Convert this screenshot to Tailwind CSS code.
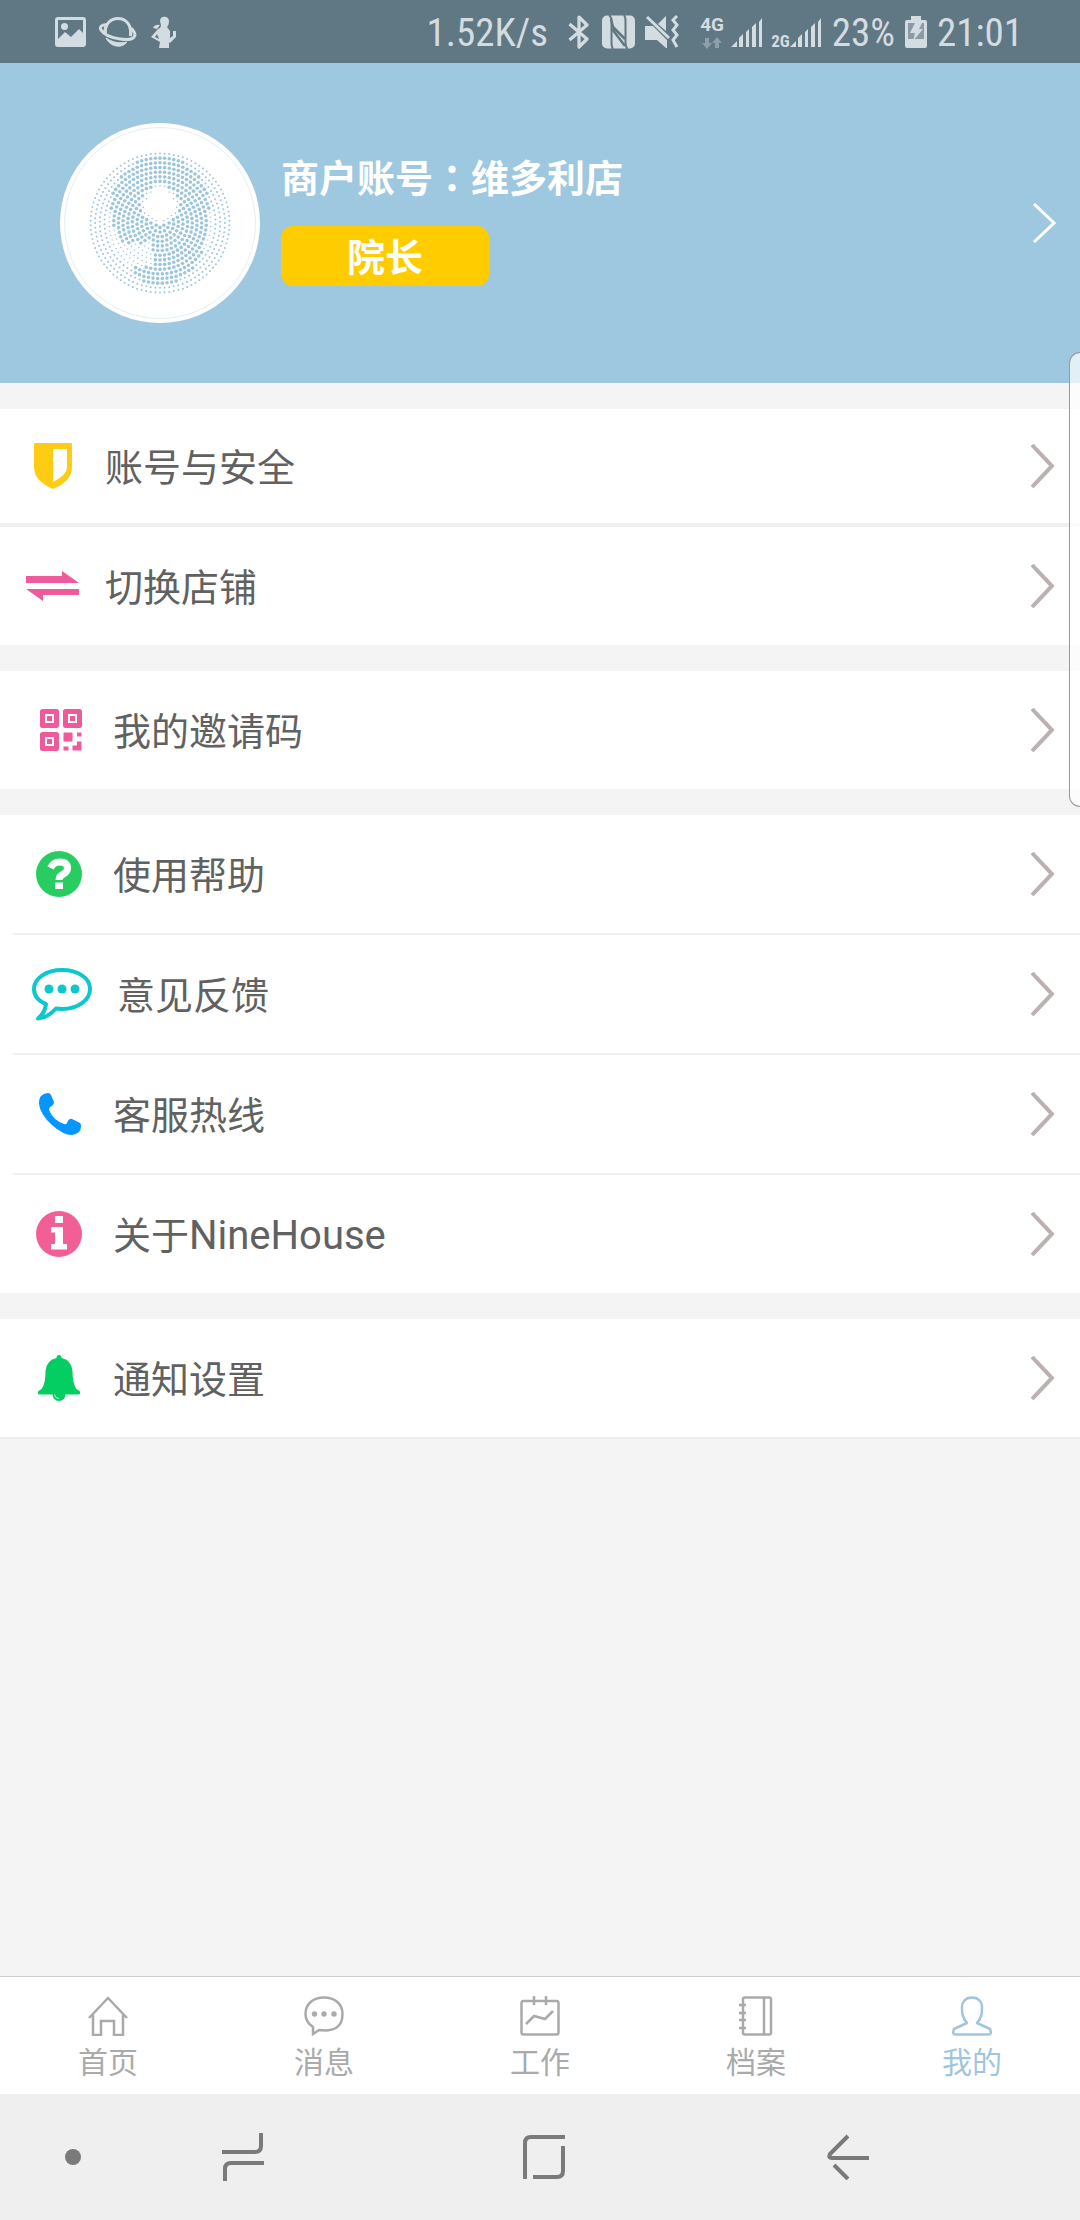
<!DOCTYPE html>
<html lang="zh-CN">
<head>
<meta charset="utf-8">
<meta name="viewport" content="width=device-width, initial-scale=1">
<title>我的</title>
<script src="https://cdn.jsdelivr.net/npm/@tailwindcss/browser@4"></script>
</head>
<body class="relative flex min-h-screen flex-col bg-[#f4f4f4] font-[Roboto,'Noto_Sans_CJK_SC',sans-serif] text-[38px] text-[#616161]">

<!-- Status bar -->
<div class="flex h-[63px] items-center bg-[#607784] pr-[57px] pl-[55px] font-['Roboto_Condensed','Liberation_Sans_Narrow',Roboto,sans-serif] text-[39px] leading-none text-[#d3dce0]">
  <svg class="h-8 w-8" viewBox="0 0 32 32" fill="currentColor"><path fill-rule="evenodd" d="M3 1h25a3 3 0 0 1 3 3v24a3 3 0 0 1-3 3H3a3 3 0 0 1-3-3V4a3 3 0 0 1 3-3zM3 4v19l7-7 6 5 8-8 4 4V4z"/><circle cx="9.500" cy="10.500" r="3.500"/></svg>
  <svg class="ml-3 h-8 w-[38px]" viewBox="0 0 38 32" fill="none" stroke="currentColor" stroke-width="3"><path d="M6.500 18C5 9 11 2.500 19 2.500S33 9 31.500 20"/><path d="M8 9C3 8 0 11 2 14c3 5 12 8 19 9 8 1 14 1 15-4 0-3-2-5-4-7M6.500 18C5.500 15 6 12 8 9M31.500 20c.6-3 .4-5-.5-8"/><path d="M7 22c4 9 16 11 21 4-8 2-15 0-21-4z" fill="currentColor" stroke-width="1"/></svg>
  <svg class="ml-[14px] h-8 w-[26px]" viewBox="0 0 26 32" fill="currentColor"><path fill-rule="evenodd" d="M9 5c0-6 9-5 9 0 0 3-1 5-2 6l3 4v6l-1 4v7H8l1-6-9-5 7-8 2-1 1-2zM6 18l-2 3 4 2z"/><path d="M2 12q2-4 7-3l-3 4z"/><path d="M22 15h3v6l-6 6-3-3 6-4z"/></svg>
  <span class="ml-auto pt-1">1.52K/s</span>
  <svg class="ml-5 h-[34px] w-[22px]" viewBox="0 0 22 34" fill="none" stroke="currentColor" stroke-width="3.200" stroke-linejoin="round"><path d="M1.500 9l17.500 15-8 8V2l8 8L1.500 25"/></svg>
  <svg class="ml-3 h-[34px] w-[33px]" viewBox="0 0 33 34"><rect width="33" height="33" y="0.500" rx="5" fill="currentColor"/><path fill="none" stroke="#607784" stroke-width="2" d="M7 0q2.500 2 2.500 6v22q0 4 1.500 6M25.500 34q-2-2-2-6V6q0-4-1.500-6"/><path fill="none" stroke="#607784" stroke-width="2.500" d="M9 4l2 8 12 12M10 14l13 17"/></svg>
  <svg class="ml-[10px] h-[34px] w-[35px]" viewBox="0 0 35 34"><path fill="currentColor" d="M0 11h8l14 14v8h-1l-9-8H0zM13 9l8-8v15z"/><path fill="none" stroke="currentColor" stroke-width="3" d="M2 2l22 21M32 1l-4 4 4 5-4 5 4 5-4 5 4 7"/></svg>
  <span class="ml-5 flex w-6 flex-col items-center gap-[5px] pt-[2px] font-[Roboto,sans-serif] text-[19px] leading-[15px] font-bold">4G
    <svg class="h-3 w-5 opacity-40" viewBox="0 0 20 12" fill="currentColor"><path d="M3 1h4v5h3l-5 6-5-6h3zM13 11h4V6h3l-5-6-5 6h3z"/></svg></span>
  <svg class="ml-[7px] mt-[3px] h-[30px] w-8" viewBox="0 0 32 30" fill="currentColor"><path d="M0 29l6-6v6zM8 29V20l4-4v13zM15 29V14l3-3v18zM21 29V9l4-4v24zM28 29V4l3-4v29z"/></svg>
  <span class="ml-2 self-end pb-4 text-[17px] leading-[12px] font-bold">2G</span>
  <svg class="mt-[3px] h-[30px] w-8" viewBox="0 0 32 30" fill="currentColor"><path d="M0 29l6-6v6zM8 29V20l4-4v13zM15 29V14l3-3v18zM21 29V9l4-4v24zM28 29V4l3-4v29z"/></svg>
  <span class="ml-[10px] pt-1">23%</span>
  <svg class="ml-[10px] h-8 w-[22px]" viewBox="0 0 22 32"><path fill="currentColor" d="M6 0h10v4h4a2 2 0 0 1 2 2v24a2 2 0 0 1-2 2H2a2 2 0 0 1-2-2V6a2 2 0 0 1 2-2h4z"/><path fill="#8b9ba5" d="M3 7h16v16H3z"/><path fill="currentColor" d="M10 7h7l-3 6h4L8 25l2-8H5z"/></svg>
  <span class="ml-[10px] pt-1">21:01</span>
</div>

<!-- Account header -->
<header>
  <a href="#" class="flex h-80 items-center bg-[#9dc8df] pr-[24px] pl-[60px] text-white">
    <svg class="h-[200px] w-[200px]" viewBox="-100 -100 200 200" role="img" aria-label="头像"><circle r="100" fill="#fff"/><circle r="95.500" fill="none" stroke="#e3eff5"/><g id="dots" fill="#9dc6dd"></g></svg>
    <div class="ml-[21px] flex flex-col items-start gap-[18px] pb-[10px] font-bold">
      <h1 class="leading-[58px]">商户账号<span class="font-['Noto_Sans_CJK_TC',sans-serif] leading-none" lang="zh-TW">：</span>维多利店</h1>
      <span class="flex h-[60px] w-[208px] items-center justify-center rounded-xl bg-[#ffcc00] pt-1">院长</span>
    </div>
    <svg class="ml-auto h-10 w-6" viewBox="0 0 24 40" fill="none" stroke="currentColor" stroke-width="3"><path d="M2 1l20 19L2 39"/></svg>
  </a>
</header>

<main class="flex grow flex-col">
  <ul class="mt-[26px] bg-white">
    <li><a href="#" class="flex h-[114px] items-center pr-[26px]">
      <span class="flex w-[105px] justify-center"><svg class="h-12 w-10" viewBox="0 0 40 48"><path fill="#ffcc14" fill-rule="evenodd" d="M2 1h36q1 0 1 1v23q0 14-19 22Q1 39 1 25V2q0-1 1-1zM20 7v33q14-7 14-15V7z"/></svg></span>
      <span class="pt-1">账号与安全</span><svg class="ml-auto h-11 w-[23px] text-[#bbb1b1]" viewBox="0 0 23 44" fill="none" stroke="currentColor" stroke-width="4"><path d="M1 1l20 21L1 43"/></svg></a></li>
    <li class="border-t-4 border-[#f0f0f0]"><a href="#" class="flex h-[118px] items-center pr-[26px]">
      <span class="flex w-[105px] justify-center"><svg class="h-8 w-[53px]" viewBox="0 0 53 32" fill="#ef5b9a"><path d="M0 6h36V1l17 12H0zM53 25H17v6L0 19h53z"/></svg></span>
      <span class="pt-1">切换店铺</span><svg class="ml-auto h-11 w-[23px] text-[#bbb1b1]" viewBox="0 0 23 44" fill="none" stroke="currentColor" stroke-width="4"><path d="M1 1l20 21L1 43"/></svg></a></li>
  </ul>

  <ul class="mt-[26px] bg-white">
    <li><a href="#" class="flex h-[118px] items-center pr-[26px]">
      <span class="flex w-[113px] justify-center pl-2"><svg class="h-[42px] w-[42px]" viewBox="0 0 42 42" fill="#ef5b9a"><path fill="none" stroke="#ef5b9a" stroke-width="5" stroke-linejoin="round" d="M2.500 2.500h14v14h-14zM25.500 2.500h14v14h-14zM2.500 25.500h14v14h-14z"/><path d="M7 7h5v5H7zM30 7h5v5h-5zM7 30h5v5H7zM23.500 23.500h9v9h-9zM37 23.500h4.500v4H37zM23.500 37.500h5v4h-5zM37 32.500h4.500v9H32.500v-5H37z"/></svg></span>
      <span class="pt-1">我的邀请码</span><svg class="ml-auto h-11 w-[23px] text-[#bbb1b1]" viewBox="0 0 23 44" fill="none" stroke="currentColor" stroke-width="4"><path d="M1 1l20 21L1 43"/></svg></a></li>
  </ul>

  <ul class="mt-[26px] bg-white">
    <li><a href="#" class="flex h-[118px] items-center pr-[26px]">
      <span class="flex w-[113px] justify-center pl-1"><svg class="h-[46px] w-[46px]" viewBox="0 0 46 46"><circle cx="23" cy="23" r="23" fill="#27cd61"/><path fill="none" stroke="#fff" stroke-width="7" d="M14.500 17q3-6 9-6 8 0 8 6 0 4-4 6-4.500 2-4.500 6"/><path fill="#fff" d="M19 31.500h8V38h-8z"/></svg></span>
      <span class="pt-1">使用帮助</span><svg class="ml-auto h-11 w-[23px] text-[#bbb1b1]" viewBox="0 0 23 44" fill="none" stroke="currentColor" stroke-width="4"><path d="M1 1l20 21L1 43"/></svg></a></li>
    <li class="ml-[13px] border-t-2 border-[#f0f0f0]"><a href="#" class="flex h-[118px] items-center pr-[26px]">
      <span class="flex w-[104px] justify-center pr-[7px]"><svg class="h-[54px] w-[60px]" viewBox="0 0 60 54"><path fill="none" stroke="#0cc8cc" stroke-width="4" stroke-linejoin="round" d="M30 3C14 3 2 11.500 2 22c0 6.500 4.500 12 12 15q-1 9-8 14.500 10-1 18-10l6 .5c16 0 28-9 28-20S46 3 30 3z"/><g fill="#0cc8cc"><circle cx="17" cy="22" r="4.500"/><circle cx="30" cy="22" r="4.500"/><circle cx="43" cy="22" r="4.500"/></g></svg></span>
      <span class="pt-1">意见反馈</span><svg class="ml-auto h-11 w-[23px] text-[#bbb1b1]" viewBox="0 0 23 44" fill="none" stroke="currentColor" stroke-width="4"><path d="M1 1l20 21L1 43"/></svg></a></li>
    <li class="ml-[13px] border-t-2 border-[#f0f0f0]"><a href="#" class="flex h-[118px] items-center pr-[26px]">
      <span class="flex w-[100px] justify-center pr-[7px]"><svg class="h-[42px] w-[42px]" viewBox="0 0 42 42"><path fill="#0596ff" d="M2 3Q5 0 9 0q2 0 3 2l3 7q0 3-4 5-1 1-1 3 4 10 15 14 2 1 3-1 2-5 5-4l8 4q1 1 1 3 0 8-9 9-9 0-20-10Q1 21 0 11q0-6 2-8z"/></svg></span>
      <span class="pt-1">客服热线</span><svg class="ml-auto h-11 w-[23px] text-[#bbb1b1]" viewBox="0 0 23 44" fill="none" stroke="currentColor" stroke-width="4"><path d="M1 1l20 21L1 43"/></svg></a></li>
    <li class="ml-[13px] border-t-2 border-[#f0f0f0]"><a href="#" class="flex h-[118px] items-center pr-[26px]">
      <span class="flex w-[100px] justify-center pr-2"><svg class="h-[46px] w-[46px]" viewBox="0 0 46 46"><circle cx="23" cy="23" r="23" fill="#f25f97"/><path fill="#fff" d="M19 5h8v7h-8zM15 16h12v17h4v5.500H15V33h4V21.500h-4z"/></svg></span>
      <span class="pt-1">关于<span class="text-[40px]">NineHouse</span></span><svg class="ml-auto h-11 w-[23px] text-[#bbb1b1]" viewBox="0 0 23 44" fill="none" stroke="currentColor" stroke-width="4"><path d="M1 1l20 21L1 43"/></svg></a></li>
  </ul>

  <ul class="mt-[26px] border-b-2 border-[#eeeeee] bg-white">
    <li><a href="#" class="flex h-[118px] items-center pr-[26px]">
      <span class="flex w-[113px] justify-center pl-1"><svg class="h-[46px] w-[42px]" viewBox="0 0 42 46"><path fill="#04cd61" d="M18.500 3q0-3 2.500-3t2.500 3q10 2 11 13 0 13 4 18l3 2q2 3-1 3.500H27.500Q27 46 21 46t-6.500-6.500H1.500q-3-.5-1-3.500l3-2q4-5 4-18 1-11 11-13z"/><path fill="none" stroke="#fff" stroke-opacity=".7" d="M16.500 39.500q.5 4 4.500 4"/></svg></span>
      <span class="pt-1">通知设置</span><svg class="ml-auto h-11 w-[23px] text-[#bbb1b1]" viewBox="0 0 23 44" fill="none" stroke="currentColor" stroke-width="4"><path d="M1 1l20 21L1 43"/></svg></a></li>
  </ul>
</main>

<!-- App tabs -->
<nav class="grid h-[118px] grid-cols-5 border-t border-[#cccccc] bg-white text-[30px] leading-[44px] text-[#aaaaaa]">
  <a href="#" class="flex flex-col items-center gap-[5px] pt-[19px]"><svg class="h-10 w-10" viewBox="0 0 40 40" fill="none" stroke="currentColor" stroke-width="2.500"><path d="M1 22L20 2l19 20M5 18v21h8V25h13v14h9V18"/></svg>首页</a>
  <a href="#" class="flex flex-col items-center gap-[5px] pt-[19px]"><svg class="h-10 w-10" viewBox="0 0 40 40" fill="none" stroke="currentColor" stroke-width="2.500"><path d="M20 1.500C9 1.500 1.500 8 1.500 18q0 8 7.500 13v7l6-4q23.500 3 23.500-16C38.500 8 31 1.500 20 1.500z"/><g fill="currentColor" stroke="none"><circle cx="10.500" cy="18" r="2.700"/><circle cx="20" cy="18" r="2.700"/><circle cx="30" cy="18" r="2.700"/></g></svg>消息</a>
  <a href="#" class="flex flex-col items-center gap-[5px] pt-[19px]"><svg class="h-10 w-10" viewBox="0 0 40 40" fill="none" stroke="currentColor" stroke-width="2.500"><rect x="1.500" y="5" width="37" height="33.500" rx="2"/><path d="M14 0v9M26 0v9M6 28l8-8 11 3 8-8"/></svg>工作</a>
  <a href="#" class="flex flex-col items-center gap-[5px] pt-[19px]"><svg class="h-10 w-10" viewBox="0 0 40 40" fill="none" stroke="currentColor" stroke-width="2.500"><rect x="7" y="1.500" width="28" height="37" rx="2"/><path d="M28 1v38M3 9h7M3 17h7M3 24h7M3 32h7"/></svg>档案</a>
  <a href="#" aria-current="page" class="flex flex-col items-center gap-[5px] pt-[19px] text-[#9fc6dd]"><svg class="h-10 w-10" viewBox="0 0 40 40" fill="none" stroke="currentColor" stroke-width="2.500" stroke-linejoin="round"><path d="M20 1.500c-7 0-10 5-10 9 0 7 0 10.500 5 16.500L2 33q-2 5.500 1 5.500h34q3 0 1-5.500l-13-6c5-6 5-9.500 5-16.500 0-4-3-9-10-9z"/></svg>我的</a>
</nav>

<!-- System navigation -->
<div class="grid h-[126px] grid-cols-[146fr_193fr_410fr_197fr_134fr] items-center justify-items-center bg-[#efefef] text-[#7a7a7a]">
  <button aria-label="隐藏导航栏" class="h-4 w-4 rounded-full bg-[#7a7a7a]"></button>
  <button aria-label="最近任务"><svg class="h-12 w-[42px]" viewBox="0 0 42 48" fill="none" stroke="currentColor" stroke-width="4"><path d="M0 19h33q6 0 6-6V0M42 30H9q-6 0-6 6v12"/></svg></button>
  <button aria-label="主屏幕"><svg class="h-11 w-[42px]" viewBox="0 0 42 44" fill="none" stroke="currentColor" stroke-width="4"><path d="M2 44V8q0-6 6-6h34M40 11v25q0 6-6 6H10"/></svg></button>
  <button aria-label="返回"><svg class="h-[46px] w-[42px]" viewBox="0 0 42 46" fill="none" stroke="currentColor" stroke-width="4"><path d="M21 2L3 20q-2 4 2 4h37M7 31l14 14"/></svg></button>
</div>

<!-- Edge panel handle -->
<div class="absolute top-[352px] right-0 h-[455px] w-[11px] rounded-l-2xl border border-r-0 border-[#999999] bg-white/70"></div>

<script>
  // Concentric dot rings; dots inside the "9" are drawn larger.
  const inEllipse = (x, y, cx, cy, rx, ry) => ((x - cx) / rx) ** 2 + ((y - cy) / ry) ** 2 < 1;
  let out = '';
  for (let ring = 0; ring < 15; ring++) {
    const r = 69.5 - ring * 4.65;
    const n = Math.round(2 * Math.PI * r / 4.65);
    for (let i = 0; i < n; i++) {
      const a = 2 * Math.PI * i / n - Math.PI / 2;
      const x = r * Math.cos(a), y = r * Math.sin(a);
      if (inEllipse(x, y, 0, -18, 14, 15)) continue;
      let s = r > 55 ? 1 : 0.75;
      const bowl = inEllipse(x, y, 0, -15, 50, 52) && !(y > 20 && x < -6 - (y - 18) * 0.1);
      const tail = inEllipse(x, y, 0, -4, 48, 67) && y > 0 && (x > -8 || (y > 44 && x > -27));
      if (bowl || tail) s = inEllipse(x, y, 0, -18, 19, 20) ? 0.8 : 1.8;
      out += `<circle cx="${x.toFixed(2)}" cy="${y.toFixed(2)}" r="${s}"/>`;
    }
  }
  document.getElementById('dots').innerHTML = out;
</script>
</body>
</html>
